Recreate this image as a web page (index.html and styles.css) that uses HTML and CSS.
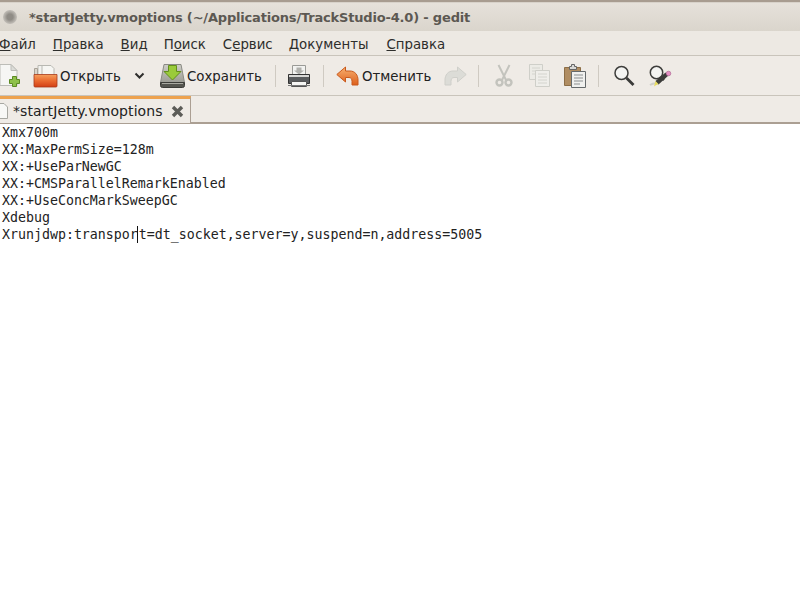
FILE: index.html
```html
<!DOCTYPE html>
<html lang="ru">
<head>
<meta charset="utf-8">
<title>gedit</title>
<link rel="stylesheet" href="styles.css">
</head>
<body>
<div class="window">
  <div class="topstrip"></div>
  <header class="titlebar">
    <span class="winbtn"></span>
    <span class="title">*startJetty.vmoptions (~/Applications/TrackStudio-4.0) - gedit</span>
  </header>
  <nav class="menubar">
    <span class="m m1"><u>Ф</u>айл</span>
    <span class="m m2"><u>П</u>равка</span>
    <span class="m m3"><u>В</u>ид</span>
    <span class="m m4">П<u>о</u>иск</span>
    <span class="m m5">С<u>е</u>рвис</span>
    <span class="m m6"><u>Д</u>окументы</span>
    <span class="m m7"><u>С</u>правка</span>
  </nav>
  <div class="toolbar">
    <svg class="ic ic-new" width="24" height="26" viewBox="0 0 24 26">
      <path d="M2 1.500h11l6 6v15H2z" fill="#f6f6f4" stroke="#bdbdb8"/>
      <path d="M13 1.500v6h6z" fill="#dcdcd8" stroke="#bdbdb8"/>
      <path d="M14.500 13.500h4v3h3v4h-3v3h-4v-3h-3v-4h3z" fill="#8fc14a" stroke="#5c8a24"/>
    </svg>
    <svg class="ic ic-open" width="25" height="24" viewBox="0 0 25 24">
      <defs><linearGradient id="openg" x1="0" y1="0" x2="0" y2="1"><stop offset="0" stop-color="#f5a05e"/><stop offset=".5" stop-color="#ea6a30"/><stop offset="1" stop-color="#d23f15"/></linearGradient></defs>
      <path d="M5 1.500h8l3 3v7H5z" fill="#f2f2ef" stroke="#b8b8b2"/>
      <path d="M9 1.500h9l3 3v7H9z" fill="#f6f6f3" stroke="#b8b8b2"/>
      <path d="M1.500 4.500h3v17h-3z" fill="#d9d4cb" stroke="#a8a298"/>
      <path d="M1 10.500h23V22a1 1 0 0 1-1 1H2a1 1 0 0 1-1-1z" fill="url(#openg)" stroke="#a8391a" stroke-width=".8"/>
    </svg>
    <span class="lbl lbl-open">Открыть</span>
    <svg class="ic ic-arrow" width="11" height="7" viewBox="0 0 11 7"><path d="M1.500 1.500l4 4 4-4" fill="none" stroke="#2e2e2c" stroke-width="2"/></svg>
    <svg class="ic ic-save" width="25" height="24" viewBox="0 0 25 24">
      <defs><linearGradient id="saveg" x1="0" y1="0" x2="0" y2="1"><stop offset="0" stop-color="#cfcfc8"/><stop offset="1" stop-color="#9c9c94"/></linearGradient></defs>
      <path d="M4 .5h17l3.500 18H.5z" fill="url(#saveg)" stroke="#8a8a84"/>
      <path d="M.5 18.500h24v3a2 2 0 0 1-2 2h-20a2 2 0 0 1-2-2z" fill="#55554f" stroke="#3c3c38"/>
      <path d="M2 19.500h21" stroke="#a8a8a0"/>
      <path d="M8.500 1.500h8v6h4.500l-8.500 8.500-8.500-8.500h4.500z" fill="#9acb3a" stroke="#638f1c"/>
    </svg>
    <span class="lbl lbl-save">Сохранить</span>
    <span class="sep sep1"></span>
    <svg class="ic ic-print" width="24" height="24" viewBox="0 0 24 24">
      <path d="M5.500 1.500h13v9h-13z" fill="#f2f2f0" stroke="#9a9a96"/>
      <path d="M9.500 3.500h5v3h2.500l-5 4-5-4h2.500z" fill="#b0b0ac"/>
      <path d="M1.500 10.500h21v9h-21z" fill="#5a5c5e" stroke="#333"/>
      <path d="M2 11h20v2H2z" fill="#d8d8d6"/>
      <path d="M4.500 17.500h15v5h-15z" fill="#f6f6f4" stroke="#555"/>
      <path d="M1 21.500h22" stroke="#777"/>
    </svg>
    <span class="sep sep2"></span>
    <svg class="ic ic-undo" width="23" height="20" viewBox="0 0 23 20">
      <defs><linearGradient id="undog" x1="0" y1="0" x2="0" y2="1"><stop offset="0" stop-color="#f8b070"/><stop offset="1" stop-color="#dd5f1c"/></linearGradient></defs>
      <path d="M9.500 1L.8 8.500l8.700 7.500v-4.500h3.500c2 0 3 1.500 3 4v3.500h6v-5c0-5-3-9-8-9H9.500z" fill="url(#undog)" stroke="#c9591c"/>
    </svg>
    <span class="lbl lbl-undo">Отменить</span>
    <svg class="ic ic-redo" width="23" height="20" viewBox="0 0 23 20">
      <path d="M13.500 1l8.700 7.500-8.700 7.500v-4.500H10c-2 0-3 1.500-3 4v3.500H1v-5c0-5 3-9 8-9h4.500z" fill="#dcdcd7" stroke="#cfcfca"/>
    </svg>
    <span class="sep sep3"></span>
    <svg class="ic ic-cut" width="18" height="23" viewBox="0 0 18 23">
      <g fill="none" stroke="#c3c3bd">
        <path d="M3.500 1l7.500 15" stroke-width="2"/><path d="M14.500 1L7 16" stroke-width="2"/>
        <circle cx="4.500" cy="18.500" r="3" stroke-width="2.400"/><circle cx="13.500" cy="18.500" r="3" stroke-width="2.400"/>
      </g>
    </svg>
    <svg class="ic ic-copy" width="21" height="23" viewBox="0 0 21 23">
      <path d="M.5.500h13v15H.5z" fill="#ecebe6" stroke="#cfcfc9"/>
      <path d="M3 4h8M3 7h8M3 10h8" stroke="#d4d4ce"/>
      <path d="M6.500 6.500h14v16h-14z" fill="#efeeea" stroke="#cfcfc9"/>
      <path d="M9 10h9M9 13h9M9 16h9M9 19h9" stroke="#d4d4ce"/>
    </svg>
    <svg class="ic ic-paste" width="22" height="24" viewBox="0 0 22 24">
      <path d="M.5 3.500h16v18H.5z" fill="#b08d62" stroke="#8d6e47"/>
      <path d="M5.500 2.500h2v-2h3v2h2v3h-7z" fill="#d8d8d6" stroke="#666"/>
      <path d="M7.500 7.500h14v16h-14z" fill="#f0f0ee" stroke="#666a6c"/>
      <path d="M10 11h9M10 14h9M10 17h9M10 20h6" stroke="#8c8f90"/>
    </svg>
    <span class="sep sep4"></span>
    <svg class="ic ic-find" width="22" height="22" viewBox="0 0 22 22">
      <circle cx="8.500" cy="8" r="6.500" fill="#f4f4f2" stroke="#3e3e3c" stroke-width="1.500"/>
      <path d="M13.500 13l7 7" stroke="#3a3a38" stroke-width="2.800"/>
    </svg>
    <svg class="ic ic-replace" width="24" height="24" viewBox="0 0 24 24">
      <path d="M2 21c3-2 5-2 8-1.500" stroke="#cfcfc9" stroke-width="2" fill="none"/>
      <circle cx="8.500" cy="8.500" r="6.200" fill="#f4f4f2" stroke="#3e3e3c" stroke-width="1.500"/>
      <path d="M13 13l3 3" stroke="#3a3a38" stroke-width="2.500"/>
      <path d="M9 19.500l-1.500-2.500 10-8.500 3 3-10 9z" fill="#3c3c3a"/>
      <circle cx="20.500" cy="9.500" r="2.300" fill="#e58fc4" stroke="#a85e8c" stroke-width=".6"/>
      <path d="M7.500 17l3 3-3 1.500-1.500 1z" fill="#e8dc60"/>
    </svg>
  </div>
  <div class="tabbar">
    <div class="tab">
      <svg class="tab-doc" width="8" height="16" viewBox="0 0 8 16"><path d="M-3 .5h7l3.500 3.500v11.500H-3z" fill="#f8f8f6" stroke="#a8a8a2"/></svg>
      <span class="tab-name">*startJetty.vmoptions</span>
      <svg class="tab-close" width="13" height="13" viewBox="0 0 13 13"><path d="M2 2l9 9M11 2l-9 9" stroke="#5c5c58" stroke-width="3.400"/></svg>
    </div>
  </div>
  <main class="editor">
    <div class="line">Xmx700m</div>
    <div class="line">XX:MaxPermSize=128m</div>
    <div class="line">XX:+UseParNewGC</div>
    <div class="line">XX:+CMSParallelRemarkEnabled</div>
    <div class="line">XX:+UseConcMarkSweepGC</div>
    <div class="line">Xdebug</div>
    <div class="line">Xrunjdwp:transpor<span class="caret"></span>t=dt_socket,server=y,suspend=n,address=5005</div>
  </main>
</div>
</body>
</html>
```
FILE: styles.css
```css
* { box-sizing: border-box; }
html, body { margin: 0; height: 100%; background: #fff; overflow: hidden; }
.window { width: 800px; height: 600px; display: flex; flex-direction: column; overflow: hidden; font-family: "DejaVu Sans", sans-serif; color: #222; }
.topstrip { height: 3px; background: #a89c90; border-bottom: 1px solid #d8d2ca; flex: none; }
.titlebar { height: 28px; flex: none; display: flex; align-items: center; background: linear-gradient(#e6e1da, #dad5cc); }
.winbtn { width: 14px; height: 14px; margin-left: 3px; border-radius: 50%; background: radial-gradient(circle, #908c86 30%, #b8b4ae 60%, #d8d4cc); flex: none; }
.title { margin-left: 12px; font-size: 13px; font-weight: bold; letter-spacing: -.18px; color: #5c5852; white-space: nowrap; }
.menubar { height: 25px; flex: none; display: flex; align-items: center; padding-top: 2px; background: #ede9e3; border-bottom: 1px solid #c9c4bb; font-size: 13.33px; color: #2e2e2c; white-space: nowrap; }
.m { flex: none; }
.m1 { margin-left: -1px; }
.m2 { margin-left: 17px; }
.m3 { margin-left: 17px; }
.m4 { margin-left: 16px; }
.m5 { margin-left: 17px; }
.m6 { margin-left: 16px; }
.m7 { margin-left: 18px; }
.toolbar { height: 40px; flex: none; display: flex; align-items: center; background: #efebe6; border-bottom: 1px solid #c9c4bb; font-size: 13.33px; color: #222; white-space: nowrap; }
.ic { flex: none; display: block; }
.lbl { flex: none; margin-top: 2px; }
.sep { width: 1px; height: 22px; background: #cfcac2; flex: none; }
.ic-new { margin-left: -2px; }
.ic-open { margin-left: 11px; }
.lbl-open { margin-left: 2px; }
.ic-arrow { margin-left: 13px; }
.ic-save { margin-left: 15px; }
.lbl-save { margin-left: 2px; }
.sep1 { margin-left: 13px; }
.ic-print { margin-left: 11px; }
.sep2 { margin-left: 12px; }
.ic-undo { margin-left: 12px; }
.lbl-undo { margin-left: 3px; }
.ic-redo { margin-left: 13px; }
.sep3 { margin-left: 11px; }
.ic-cut { margin-left: 16px; }
.ic-copy { margin-left: 16px; }
.ic-paste { margin-left: 14px; }
.sep4 { margin-left: 12px; }
.ic-find { margin-left: 14px; }
.ic-replace { margin-left: 13px; }
.tabbar { height: 28px; flex: none; display: flex; align-items: flex-start; background: #efebe6; border-bottom: 2px solid #ab9f93; }
.tab { height: 27px; width: 191px; display: flex; align-items: center; background: #efebe6; border-top: 3px solid #eda24f; border-right: 1px solid #ab9f93; flex: none; }
.tab-doc { flex: none; }
.tab-name { margin-left: 5px; font-size: 14px; letter-spacing: .1px; color: #222; white-space: nowrap; }
.tab-close { margin-left: 8px; flex: none; }
.editor { flex: 1; background: #fff; padding-left: 2px; font-family: "DejaVu Sans Mono", monospace; font-size: 13.28px; line-height: 17px; color: #222; }
.line { height: 17px; white-space: pre; }
.caret { display: inline-block; width: 1px; height: 17px; margin-left: -1px; margin-right: 1px; border-left: 1px solid #111; vertical-align: top; }
```
